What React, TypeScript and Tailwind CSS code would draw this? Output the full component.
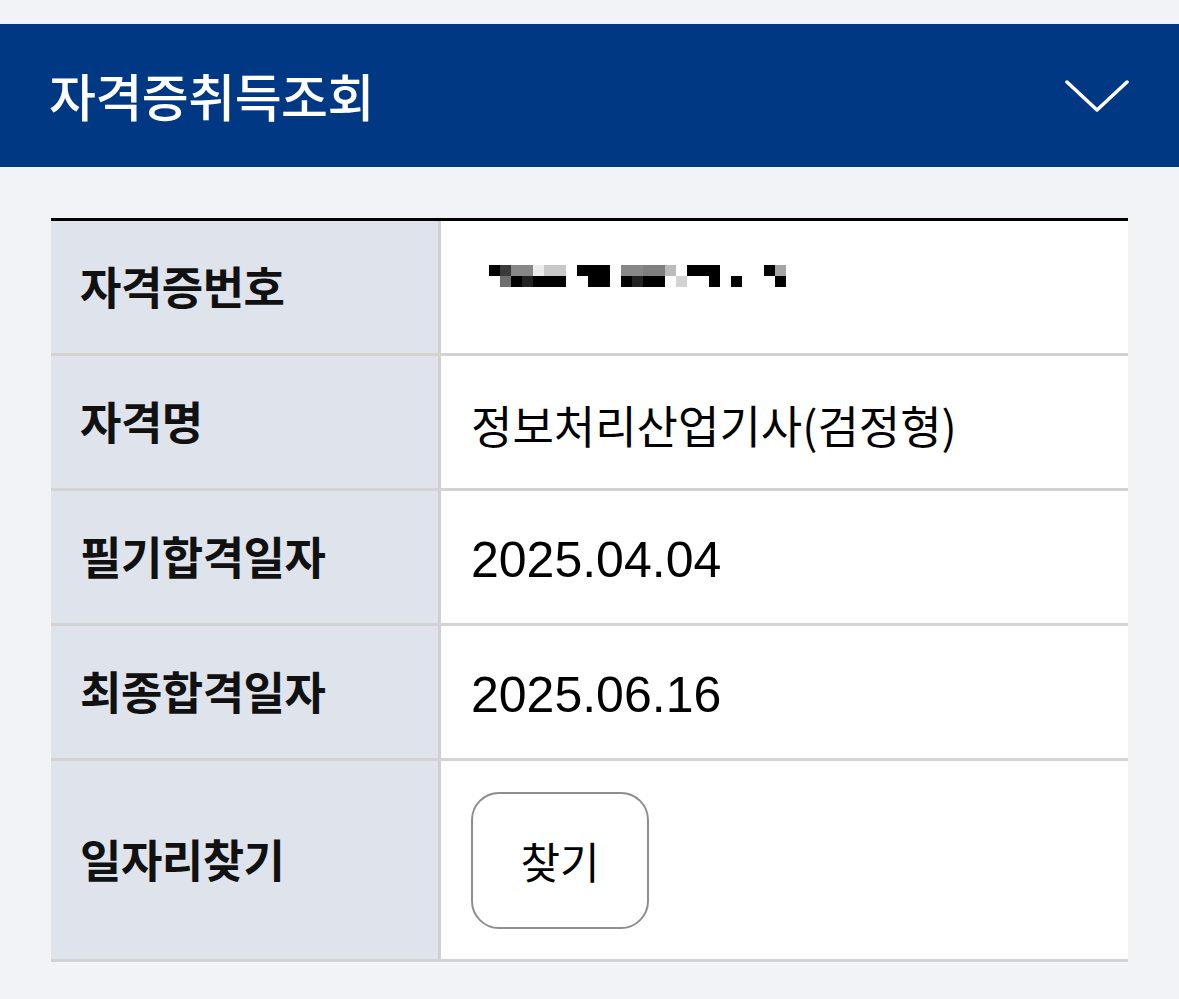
import { ReactNode } from 'react'

/* ---- blurred certificate number (pixelated in the original) ---- */
const W = '#ffffff'
const top = [
  '#000000', '#3a3a3a', '#878787', '#878787', '#ececec', '#c8c8c8', '#c8c8c8', W,
  '#000000', '#000000', '#000000', W, '#878787', '#878787', '#7f7f7f', '#7f7f7f',
  '#bbbbbb', W, '#000000', '#000000', '#000000', W, W, W, W, '#000000', '#a5a5a5',
]
const bottom = [
  W, '#6e6e6e', '#000000', '#222222', '#000000', '#000000', '#000000', W,
  W, '#000000', '#000000', W, '#000000', '#222222', '#000000', '#000000',
  W, '#d3d3d3', W, W, '#000000', W, '#000000', W, W, W, '#000000',
]

function BlurredNumber() {
  return (
    <svg width={top.length * 11} height={22} viewBox={`0 0 ${top.length * 11} 22`}>
      {top.map((c, i) => (c === W ? null : <rect key={'t' + i} x={i * 11} y={0} width={11} height={11} fill={c} />))}
      {bottom.map((c, i) => (c === W ? null : <rect key={'b' + i} x={i * 11} y={11} width={11} height={11} fill={c} />))}
    </svg>
  )
}

function Row({ label, children, tall }: { label: string; children: ReactNode; tall?: boolean }) {
  return (
    <div className={`flex border-b-[3px] border-[#d3d3d3] ${tall ? 'h-[201px]' : 'h-[135px]'}`}>
      <div className="w-[390px] shrink-0 flex items-center bg-[#dee3ec] border-r-[3px] border-[#d0d0d0] pl-[29px] pt-[6px] text-[45px] font-bold text-[#111111] tracking-[-0.5px]">
        {label}
      </div>
      <div className="flex-1 flex items-center bg-white pl-[30px] text-black">{children}</div>
    </div>
  )
}

const cjk = { fontFamily: '"Noto Sans CJK KR", sans-serif' }

export default function App() {
  return (
    <div
      className="min-h-screen bg-[#f2f3f7] pt-[24px]"
      style={{ fontFamily: '"Liberation Sans", "Noto Sans CJK KR", sans-serif' }}
    >
      <header className="h-[143px] bg-[#003883] flex items-center justify-between pl-[49px] pr-[50px]">
        <h1 className="text-[51px] font-medium text-white leading-none tracking-[-0.5px]" style={cjk}>
          자격증취득조회
        </h1>
        <svg width="64" height="34" viewBox="0 0 64 34" fill="none" className="mt-[2px]">
          <path d="M2 2 L32 30 L62 2" stroke="white" strokeWidth="3.5" strokeLinecap="round" strokeLinejoin="round" />
        </svg>
      </header>

      <div className="px-[51px] pt-[51px] pb-[37px]">
        <div className="border-t-[3px] border-black">
          <Row label="자격증번호">
            <div className="pl-[18px] mb-[22px]">
              <BlurredNumber />
            </div>
          </Row>
          <Row label="자격명">
            <span className="text-[45px] pt-[6px]" style={cjk}>
              정보처리산업기사(검정형)
            </span>
          </Row>
          <Row label="필기합격일자">
            <span className="text-[50px] pt-[6px]">2025.04.04</span>
          </Row>
          <Row label="최종합격일자">
            <span className="text-[50px] pt-[6px]">2025.06.16</span>
          </Row>
          <Row label="일자리찾기" tall>
            <button className="w-[178px] h-[137px] rounded-[28px] border-2 border-[#8e8e8e] bg-white text-[43px] text-black" style={cjk}>
              찾기
            </button>
          </Row>
        </div>
      </div>
    </div>
  )
}
